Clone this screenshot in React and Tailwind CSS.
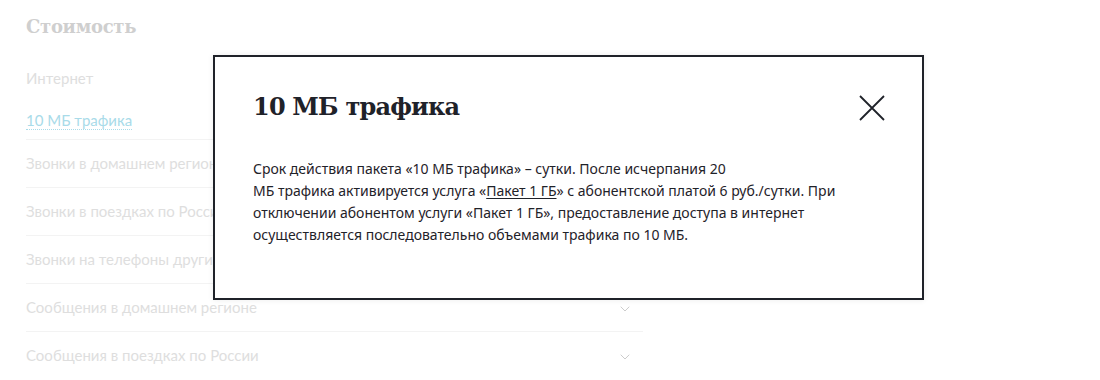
import { ChevronDown } from "lucide-react";

const rows = [
  "Звонки в домашнем регионе",
  "Звонки в поездках по России",
  "Звонки на телефоны других стран",
  "Сообщения в домашнем регионе",
  "Сообщения в поездках по России",
];

export default function App() {
  return (
    <div className="relative w-[1100px] h-[380px] overflow-hidden bg-white font-['Lato',sans-serif]">
      {/* page behind the modal, faded */}
      <div className="w-[643px] pl-[26px] pt-[13px]">
        <h2 className="font-['DejaVu_Serif',serif] font-bold text-[18px] tracking-[-0.3px] leading-[28px] text-[#cfcfcf]">
          Стоимость
        </h2>
        <div className="mt-[25px] text-[15px] leading-[24px] text-[#dedede]">Интернет</div>
        <div className="mt-[18px] pb-[7px]">
          <span className="text-[15px] leading-[24px] text-[#a9dbe9] border-b border-dotted border-[#a9dbe9]">
            10 МБ трафика
          </span>
        </div>
        {rows.map((r) => (
          <div
            key={r}
            className="flex items-center justify-between h-[48px] border-t border-[#f3f3f3] pr-[10px]"
          >
            <span className="text-[15px] text-[#dedede]">{r}</span>
            <ChevronDown className="w-[16px] h-[16px] mt-[2px] text-[#cccccc]" strokeWidth={1.5} />
          </div>
        ))}
      </div>

      {/* modal */}
      <div className="absolute left-[213px] top-[55px] w-[711px] h-[245px] bg-white border-2 border-[#1f2229] shadow-[0_0_6px_rgba(0,0,0,0.08)]">
        <div className="flex items-start justify-between pl-[38px] pr-[36px] pt-[33px]">
          <h1 className="font-['DejaVu_Serif',serif] font-bold text-[24px] tracking-[-0.8px] leading-[34px] text-[#1f2229]">
            10 МБ трафика
          </h1>
          <button className="mt-[4px] w-[28px] h-[28px] flex items-center justify-center">
            <svg width="28" height="28" viewBox="0 0 28 28" fill="none">
              <path d="M2 2L26 26M26 2L2 26" stroke="#1f2229" strokeWidth="1.8" />
            </svg>
          </button>
        </div>
        <p className="mt-[34px] pl-[38px] whitespace-nowrap font-['Noto_Sans',sans-serif] text-[14px] leading-[22px] text-[#1f2229]">
          Срок действия пакета «10 МБ трафика» – сутки. После исчерпания 20
          <br />
          МБ трафика активируется услуга «<span className="underline underline-offset-2">Пакет 1 ГБ</span>» с абонентской платой 6 руб./сутки. При
          <br />
          отключении абонентом услуги «Пакет 1 ГБ», предоставление доступа в интернет
          <br />
          осуществляется последовательно объемами трафика по 10 МБ.
        </p>
      </div>
    </div>
  );
}
